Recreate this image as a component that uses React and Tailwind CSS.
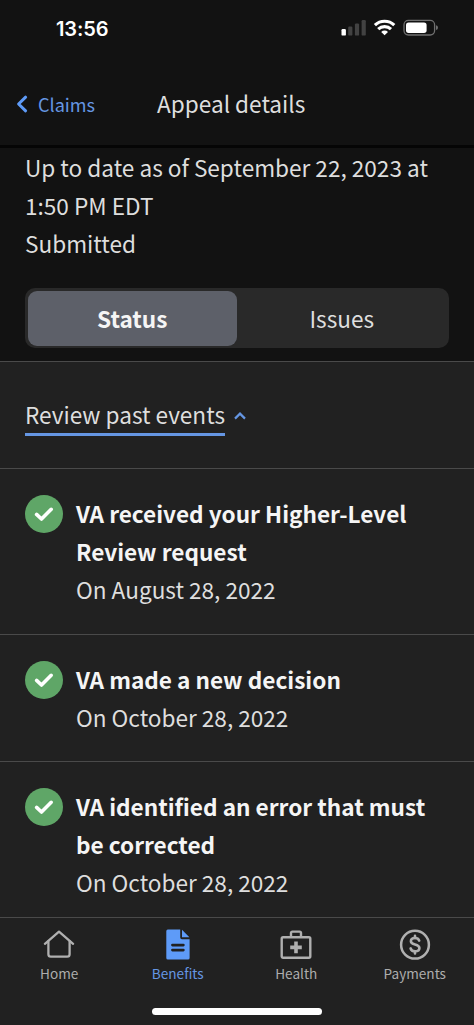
import React, { useState } from "react";

const Events = [
  { title: "VA received your Higher-Level Review request", date: "On August 28, 2022" },
  { title: "VA made a new decision", date: "On October 28, 2022" },
  { title: "VA identified an error that must be corrected", date: "On October 28, 2022" },
];

const StatusBar = () => (
  <div className="h-[56px] shrink-0 flex items-center justify-between pl-[56px] pr-[35px] text-white">
    <p className="pt-[1px] font-['Inter',sans-serif] font-semibold text-[20px] leading-none tracking-[-0.1px]">13:56</p>
    <svg width="98" height="18" viewBox="0 0 98 18" className="shrink-0">
      <rect x="0.5" y="10" width="4.4" height="6.6" rx="1.2" fill="#fff" />
      <rect x="7.2" y="7.6" width="4.2" height="9" rx="1.2" fill="#424242" />
      <rect x="13.9" y="4.4" width="4.2" height="12.2" rx="1.2" fill="#424242" />
      <rect x="20.6" y="1" width="4.2" height="15.6" rx="1.2" fill="#424242" />
      <g fill="none" stroke="#fff" strokeWidth="3.1">
        <path d="M33.9 6.2 a14 14 0 0 1 19.4 0" />
        <path d="M37.2 10.2 a9.2 9.2 0 0 1 12.8 0" />
      </g>
      <path d="M43.6 16.3 L40.2 12.9 a4.9 4.9 0 0 1 6.8 0 Z" fill="#fff" />
      <rect x="63" y="1.4" width="30.6" height="14.6" rx="4.4" fill="none" stroke="#6f6f6f" strokeWidth="1.3" />
      <rect x="65" y="3.5" width="20.6" height="10.4" rx="2.6" fill="#fff" />
      <path d="M95 6.3 q2 0.5 2 2.4 t-2 2.4 z" fill="#6f6f6f" />
    </svg>
  </div>
);

const CheckBadge = () => (
  <div className="w-[38px] h-[38px] shrink-0 rounded-full bg-[#5fa667] flex items-center justify-center">
    <svg width="20" height="16" viewBox="0 0 20 16" fill="none">
      <path
        d="M2.6 8.4 L7.5 13 L17.2 3.3"
        stroke="#fff"
        strokeWidth="3.6"
        strokeLinecap="round"
        strokeLinejoin="round"
      />
    </svg>
  </div>
);

const HomeIcon = () => (
  <svg width="32" height="32" viewBox="0 0 32 32" fill="none" stroke="#b0b0b0" strokeWidth="2.3" strokeLinecap="round" strokeLinejoin="round">
    <path d="M1.9 14.8 L16 2.6 L30.1 14.8" />
    <path d="M5.4 12.2 V25.2 a2.4 2.4 0 0 0 2.4 2.4 H24.2 a2.4 2.4 0 0 0 2.4 -2.4 V12.2" />
  </svg>
);

const BenefitsIcon = () => (
  <svg width="32" height="32" viewBox="0 0 32 32">
    <path d="M5.8 0.6 H18.2 V8.4 a1.8 1.8 0 0 0 1.8 1.8 H27.6 V28.9 a1.6 1.6 0 0 1 -1.6 1.6 H5.9 a1.6 1.6 0 0 1 -1.6 -1.6 V2.2 a1.6 1.6 0 0 1 1.5 -1.6 Z" fill="#5e9bf8" />
    <path d="M20 0.8 L27.4 8.3 H20 Z" fill="#5e9bf8" />
    <path d="M10.4 16.1 H21.4 M10.4 21.1 H21.4" stroke="#212121" strokeWidth="2.6" strokeLinecap="round" />
  </svg>
);

const HealthIcon = () => (
  <svg width="32" height="32" viewBox="0 0 32 32" fill="none" stroke="#b0b0b0" strokeWidth="2.4" strokeLinejoin="round">
    <rect x="1.7" y="8.3" width="28.6" height="20.4" rx="1.4" />
    <path d="M11 8 V4 a1.4 1.4 0 0 1 1.4 -1.4 H19.6 a1.4 1.4 0 0 1 1.4 1.4 V8" />
    <path d="M16 12.6 V24.2 M10.2 18.4 H21.8" strokeWidth="3.6" />
  </svg>
);

const PaymentsIcon = () => (
  <svg width="32" height="32" viewBox="0 0 32 32" fill="none" stroke="#b0b0b0" strokeLinecap="round">
    <circle cx="16" cy="15.7" r="13.9" strokeWidth="2.5" />
    <path d="M20.2 11.6 C19.6 9.8 18.1 9 16 9 C13.6 9 11.9 10.2 11.9 12.2 C11.9 16.6 20.4 14.2 20.4 19 C20.4 21.2 18.5 22.3 16.1 22.3 C13.8 22.3 12.1 21.3 11.6 19.4" strokeWidth="2.6" />
    <path d="M16 6.9 V8.9 M16 22.5 V24.5" strokeWidth="2.6" />
  </svg>
);

const Tabs = [
  { name: "Home", Icon: HomeIcon },
  { name: "Benefits", Icon: BenefitsIcon },
  { name: "Health", Icon: HealthIcon },
  { name: "Payments", Icon: PaymentsIcon },
];

const App = () => {
  const [view, setView] = useState("Status");
  const [open, setOpen] = useState(true);

  return (
    <div className="w-[474px] h-[1025px] overflow-hidden flex flex-col bg-[#121212] text-[#dedede] font-['Noto_Sans_CJK_SC',sans-serif] text-[22.6px] leading-[38px]">
      <StatusBar />
      <header className="h-[92px] shrink-0 flex items-center border-b-[3px] border-[#050505] pl-[16px] pt-[7px]">
        <button className="w-[141px] flex items-center text-[#6596e3] text-[18.1px]">
          <svg width="12" height="18" viewBox="0 0 12 18" fill="none" className="mr-[10px]">
            <path d="M9.6 2.2 L2.6 9 L9.6 15.8" stroke="#5e9bf8" strokeWidth="3" strokeLinecap="round" strokeLinejoin="round" />
          </svg>
          Claims
        </button>
        <h1>Appeal details</h1>
      </header>

      <section className="h-[213px] shrink-0 px-[25px] pt-[1px]">
        <p>Up to date as of September 22, 2023 at 1:50 PM EDT</p>
        <p>Submitted</p>
        <div className="mt-[25px] h-[60px] rounded-[10px] bg-[#292929] p-[2.5px] flex">
          {["Status", "Issues"].map((name) => (
            <button
              key={name}
              onClick={() => setView(name)}
              className={
                view === name
                  ? "flex-1 pt-[2px] rounded-[9px] bg-[#5d6069] text-[#f5f5f5] font-bold"
                  : "flex-1 pt-[2px] rounded-[9px]"
              }
            >
              {name}
            </button>
          ))}
        </div>
      </section>

      <main className="flex-1 min-h-0 overflow-hidden bg-[#212121] border-t border-[#4a4a4a]">
        <div className="h-[106px] pl-[25px] pt-[34px] flex items-start">
          <button onClick={() => setOpen(!open)} className="flex items-center">
            <span className="border-b-[3px] border-[#6596e3] leading-[37px]">Review past events</span>
            <svg width="14" height="10" viewBox="0 0 14 10" fill="none" className="ml-[8px]">
              <path d="M2 7.6 L7 2.6 L12 7.6" stroke="#6596e3" strokeWidth="2.2" />
            </svg>
          </button>
        </div>
        {open &&
          Events.map((Each, Ind) => (
            <div key={Ind} className="flex items-start gap-[13px] border-t border-[#4a4a4a] px-[25px] pt-[26px] pb-[24.6px]">
              <CheckBadge />
              <div>
                <p className="font-bold text-[#f5f5f5]">{Each.title}</p>
                <p>{Each.date}</p>
              </div>
            </div>
          ))}
      </main>

      <nav className="h-[108px] shrink-0 bg-[#212121] border-t border-[#4a4a4a] flex flex-col items-center">
        <div className="w-full flex pt-[11px]">
          {Tabs.map(({ name, Icon }) => (
            <div
              key={name}
              className={
                name === "Benefits"
                  ? "flex-1 flex flex-col items-center text-[#6596e3]"
                  : "flex-1 flex flex-col items-center text-[#adadad]"
              }
            >
              <Icon />
              <span className="text-[13.6px] leading-[24px]">{name}</span>
            </div>
          ))}
        </div>
        <div className="mt-[23px] w-[170px] h-[7px] rounded-full bg-white" />
      </nav>
    </div>
  );
};

export default App;
